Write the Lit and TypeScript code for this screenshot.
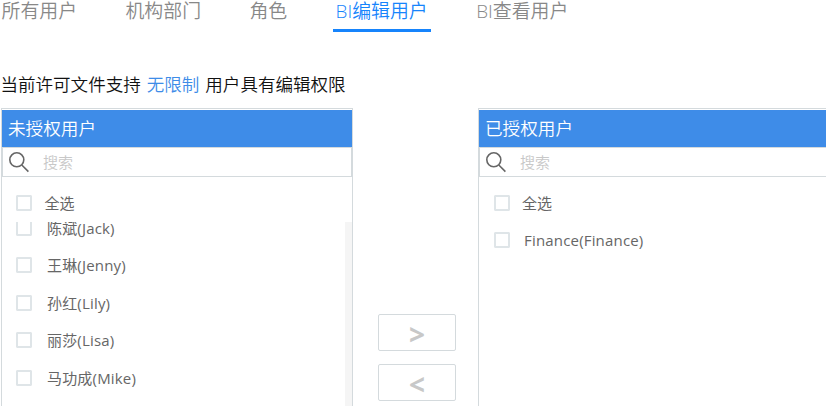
import { css, html, LitElement } from "lit";
import { customElement, property } from "lit/decorators.js";

@customElement("user-panel")
export class UserPanel extends LitElement {
  @property()
  heading: string = "";

  @property({ type: Array })
  users: string[] = [];

  @property({ type: Boolean, reflect: true })
  scrolled: boolean = false;

  render() {
    return html`
      <div class="header">${this.heading}</div>
      <div class="search">
        <svg width="22" height="22" viewBox="0 0 22 22">
          <circle cx="8.8" cy="8.8" r="7" />
          <path d="M13.8 14 L20.4 20.6" />
        </svg>
        <span>搜索</span>
      </div>
      <div class="row all">
        <i class="box"></i>
        <span class="label">全选</span>
      </div>
      <div class="list">
        <div class="rows">
          ${this.users.map(
            (user) => html`
              <div class="row">
                <i class="box"></i>
                <span class="label">${user}</span>
              </div>
            `
          )}
        </div>
      </div>
    `;
  }

  static styles = css`
    :host {
      display: flex;
      flex-direction: column;
      box-sizing: border-box;
      width: 352px;
      height: 420px;
      flex: none;
      border: 1px solid #d4dadd;
      padding-top: 1px;
    }

    .header {
      height: 37px;
      flex: none;
      padding-left: 6px;
      background: #3e8ce8;
      color: #fff;
      font-size: 17.6px;
      line-height: 37px;
    }

    .search {
      display: flex;
      align-items: center;
      box-sizing: border-box;
      height: 30px;
      flex: none;
      border: 1px solid #d4dadd;
      padding-left: 5px;
      color: #c8c8c8;
      font-size: 15px;
      line-height: 28px;
    }

    .search svg {
      margin-right: 13px;
      fill: none;
      stroke: #666;
      stroke-width: 1.6;
    }

    .row {
      display: flex;
      align-items: center;
      height: 37.5px;
      padding-left: 14px;
      color: #666;
      font-size: 15px;
      font-weight: 400;
      line-height: 20px;
    }

    .rows .label {
      letter-spacing: 0.18px;
    }

    .all {
      height: 37px;
      flex: none;
      margin-top: 7px;
    }

    .box {
      box-sizing: border-box;
      width: 16px;
      height: 16px;
      border: 1px solid #dfe5e8;
      border-radius: 1px;
      box-shadow: inset 0 0 0 1px #dfe5e8;
      margin-right: 15px;
    }

    .all .box {
      margin-right: 12.5px;
    }

    .list {
      flex: 1;
      overflow: hidden;
    }

    :host([scrolled]) .list {
      margin-top: 1px;
      border-right: 7px solid #f5f5f5;
    }

    :host([scrolled]) .rows {
      margin-top: -13px;
    }

    :host(:not([scrolled])) .row {
      padding-left: 15px;
    }

    :host(:not([scrolled])) .box {
      margin-right: 14px;
    }

    :host(:not([scrolled])) .all .box {
      margin-right: 12px;
    }
  `;
}

@customElement("app-root")
export class AppRoot extends LitElement {
  private tabs = ["所有用户", "机构部门", "角色", "BI编辑用户", "BI查看用户"];
  private active = "BI编辑用户";
  private unauthorized = [
    "陈斌(Jack)",
    "王琳(Jenny)",
    "孙红(Lily)",
    "丽莎(Lisa)",
    "马功成(Mike)",
  ];
  private authorized = ["Finance(Finance)"];

  render() {
    return html`
      <nav class="tabs">
        ${this.tabs.map(
          (tab) => html`
            <span class="tab ${tab === this.active ? "active" : ""}">${tab}</span>
          `
        )}
      </nav>
      <p class="license">
        <span>当前许可文件支持</span>
        <span class="limit">无限制</span>
        <span>用户具有编辑权限</span>
      </p>
      <div class="transfer">
        <user-panel heading="未授权用户" .users=${this.unauthorized} scrolled></user-panel>
        <div class="actions">
          <button>&gt;</button>
          <button>&lt;</button>
        </div>
        <user-panel heading="已授权用户" .users=${this.authorized}></user-panel>
      </div>
    `;
  }

  static styles = css`
    :host {
      display: block;
      height: 406px;
      overflow: hidden;
      background: #fff;
      font-family: "Open Sans", "Noto Sans CJK SC", sans-serif;
      font-weight: 350;
      white-space: nowrap;
    }

    .tabs {
      display: flex;
      gap: 42.4px;
      height: 32px;
      margin-left: -1.5px;
    }

    .tab {
      box-sizing: border-box;
      height: 32px;
      padding: 0 3px;
      color: #888;
      font-size: 18.9px;
      line-height: 22px;
    }

    .active {
      border-bottom: 3px solid #1684fc;
      color: #1684fc;
    }

    .license {
      display: flex;
      gap: 6px;
      height: 26px;
      margin: 39px 0 11px 0.5px;
      color: #111;
      font-size: 17.55px;
      line-height: 26px;
    }

    .limit {
      color: #3e8ce8;
    }

    .transfer {
      display: flex;
      margin-left: 1px;
    }

    .actions {
      display: flex;
      flex-direction: column;
      gap: 13px;
      flex: none;
      width: 78px;
      padding: 206px 22px 0 25px;
    }

    button {
      box-sizing: border-box;
      width: 78px;
      height: 37px;
      padding: 3px 0 0;
      border: 1px solid #d4dadd;
      border-radius: 2px;
      background: #fff;
      color: #c8c8c8;
      font-family: "Open Sans", sans-serif;
      font-size: 28px;
      font-weight: 700;
      line-height: 32px;
    }
  `;
}
